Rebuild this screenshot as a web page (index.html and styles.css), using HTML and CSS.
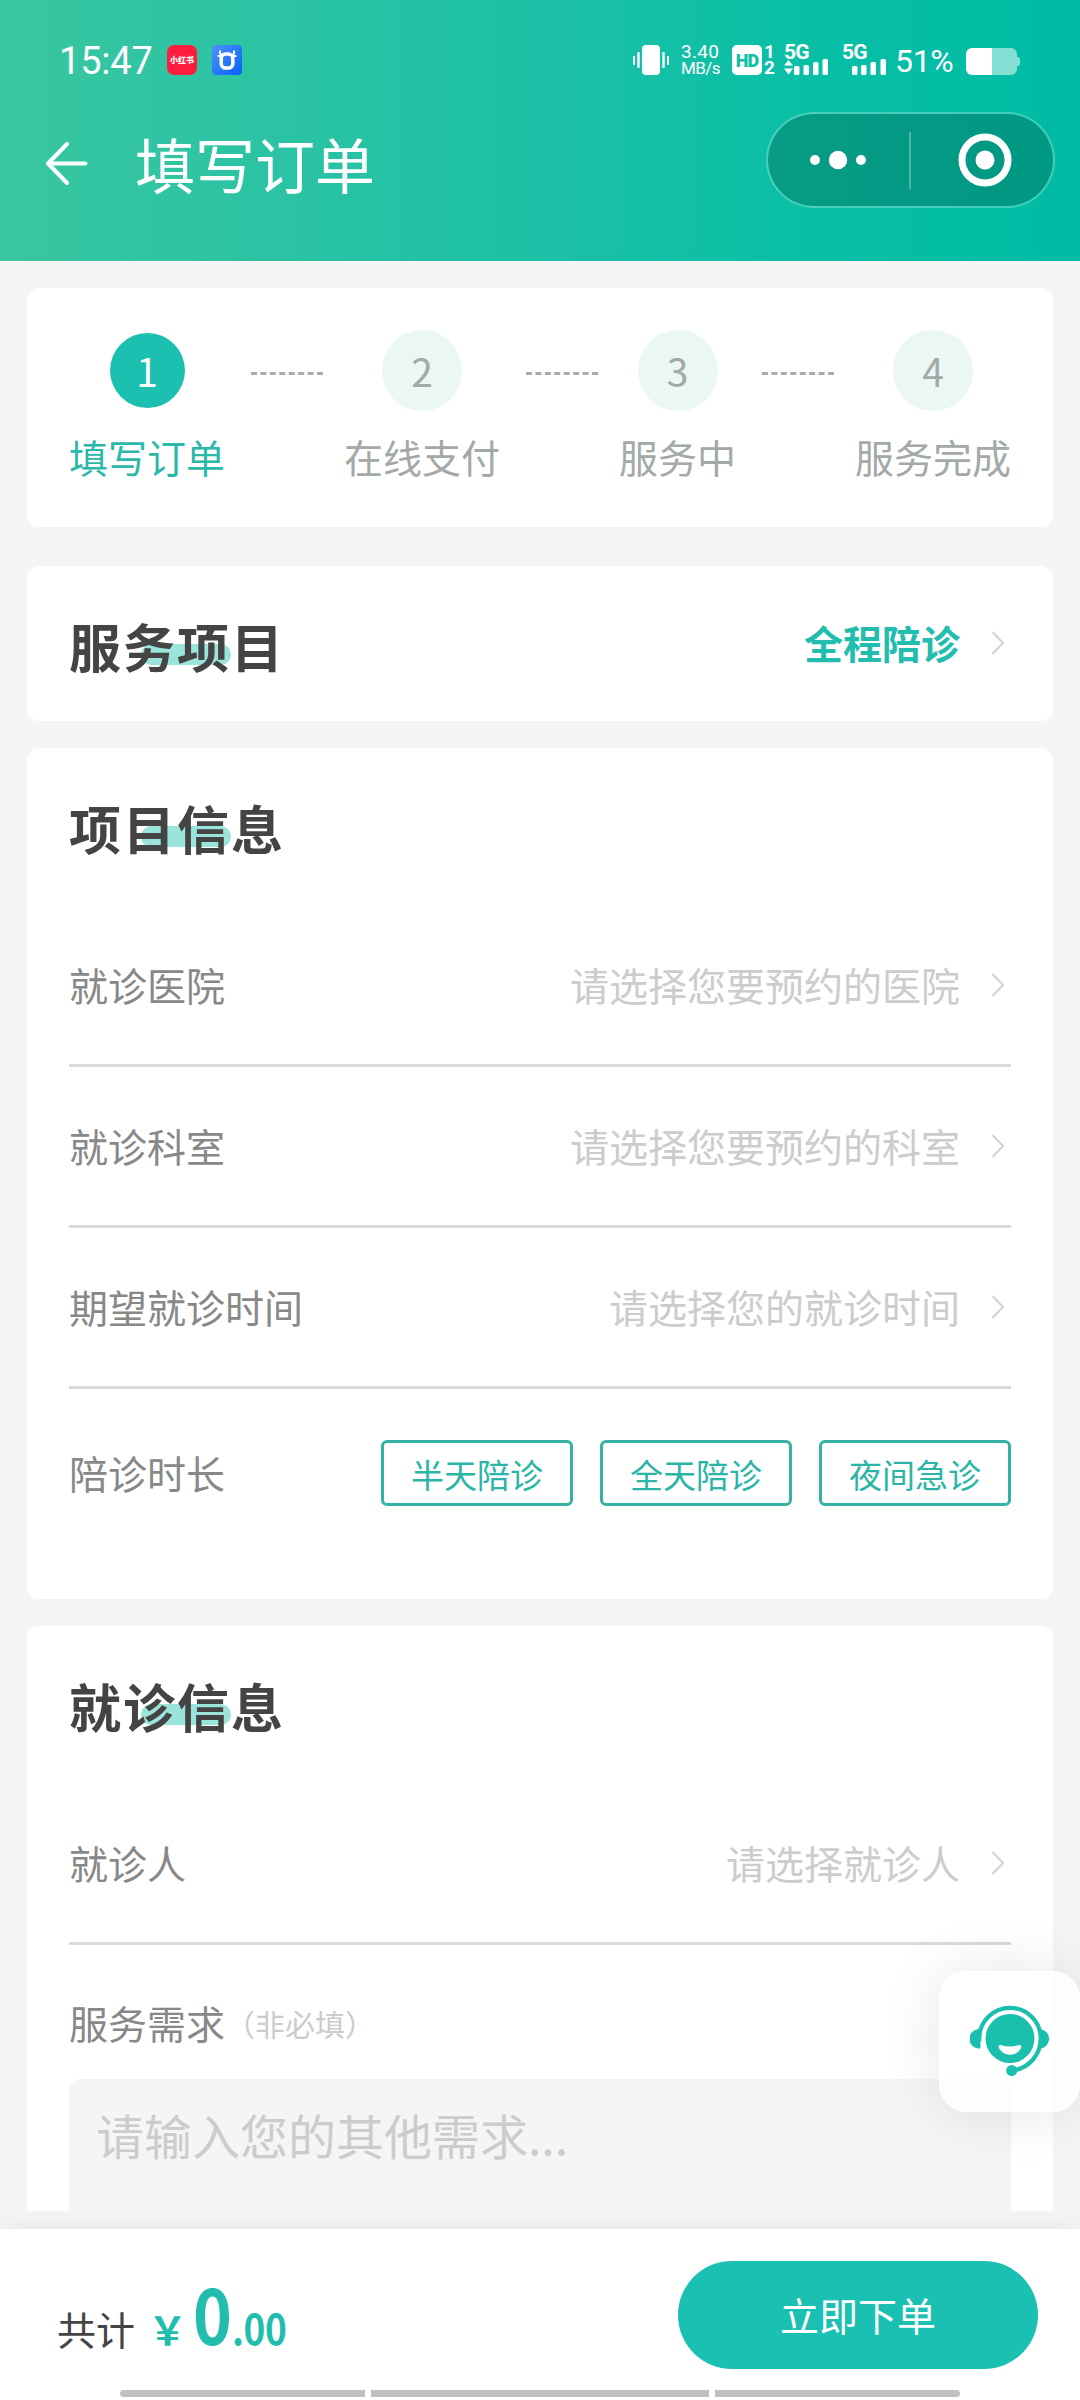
FILE: index.html
```html
<!DOCTYPE html>
<html lang="zh-CN">
<head>
    <meta charset="UTF-8">
    <meta name="viewport" content="width=device-width, initial-scale=1.0">
    <title>填写订单</title>
    <link rel="stylesheet" href="styles.css">
</head>
<body>
    <header class="header">
        <div class="status">
            <span class="clock">15:47</span>
            <span class="app app-red">小红书</span>
            <svg class="app-blue" width="30" height="30" viewBox="0 0 30 30">
                <defs>
                    <linearGradient id="blue" x1="0" y1="0" x2="1" y2="1">
                        <stop offset="0" stop-color="#4d93fb"/>
                        <stop offset="1" stop-color="#0560fb"/>
                    </linearGradient>
                </defs>
                <rect width="30" height="30" rx="4" fill="url(#blue)"/>
                <rect x="9.2" y="9" width="11.6" height="14" rx="4.5" fill="none" stroke="#fff" stroke-width="3.6"/>
                <path d="M8 5.500v3l3 2M22 5.500v3l-3 2M5.500 11h4M24.500 11h-4" fill="none" stroke="#fff" stroke-width="2"/>
            </svg>

            <div class="status-right">
                <svg class="vibrate" width="36" height="30" viewBox="0 0 36 30" fill="#fff">
                    <rect x="9" y="0" width="18" height="30" rx="4"/>
                    <rect x="0" y="11" width="2" height="9" rx="1"/>
                    <rect x="4.300" y="7" width="2.400" height="16" rx="1"/>
                    <rect x="29.300" y="7" width="2.400" height="16" rx="1"/>
                    <rect x="34" y="11" width="2" height="9" rx="1"/>
                </svg>
                <div class="speed">
                    <span>3.40</span>
                    <span>MB/s</span>
                </div>
                <span class="hd">HD</span>
                <div class="sim">
                    <span>1</span>
                    <span>2</span>
                </div>
                <div class="signal">
                    <span>5G</span>
                    <svg width="45" height="16" viewBox="0 0 45 16" fill="#fff">
                        <path d="M0 6.500 4.500 1l4.500 5.500zM0 9.500h9L4.500 15.500z"/>
                        <rect x="10" y="7" width="5.500" height="9" rx="1.500"/>
                        <rect x="19.500" y="6" width="5.500" height="10" rx="1.500"/>
                        <rect x="29" y="3" width="5.500" height="13" rx="1.500"/>
                        <rect x="38.500" y="0" width="5.500" height="16" rx="1.500"/>
                    </svg>
                </div>
                <div class="signal signal-2">
                    <span>5G</span>
                    <svg width="45" height="16" viewBox="0 0 45 16" fill="#fff">
                        <rect x="10" y="7" width="5.500" height="9" rx="1.500"/>
                        <rect x="19" y="6" width="5.500" height="10" rx="1.500"/>
                        <rect x="28.500" y="3" width="5.500" height="13" rx="1.500"/>
                        <rect x="38.500" y="0" width="5.500" height="16" rx="1.500"/>
                    </svg>
                </div>
                <span class="percent">51%</span>
                <svg class="battery" width="54" height="27" viewBox="0 0 54 27">
                    <path d="M6 0h39a6 6 0 0 1 6 6v3q3 0 3 2v5q0 2-3 2v3a6 6 0 0 1-6 6H6z" fill="#fff" opacity="0.52"/>
                    <path d="M6 0h20v27H6a6 6 0 0 1-6-6V6a6 6 0 0 1 6-6z" fill="#fff"/>
                </svg>
            </div>
        </div>

        <div class="nav">
            <svg class="back" width="42" height="43" viewBox="0 0 42 43" fill="none" stroke="#fff" stroke-width="4" stroke-linecap="round" stroke-linejoin="round">
                <path d="M21 2 2 21.500 21 41M3 21.500h36.500"/>
            </svg>
            <h1>填写订单</h1>
            <div class="capsule">
                <svg width="56" height="20" viewBox="0 0 56 20" fill="#fff">
                    <circle cx="5" cy="10" r="5"/>
                    <circle cx="28" cy="10" r="9.200"/>
                    <circle cx="51" cy="10" r="5"/>
                </svg>
                <i class="split"></i>
                <svg width="54" height="54" viewBox="0 0 54 54">
                    <circle cx="27" cy="27" r="23" fill="none" stroke="#fff" stroke-width="7"/>
                    <circle cx="27" cy="27" r="9.500" fill="#fff"/>
                </svg>
            </div>
        </div>
    </header>

    <main class="content">
        <section class="card steps">
            <div class="step active">
                <span class="num">1</span>
                <span class="label">填写订单</span>
            </div>
            <i class="dash"></i>
            <div class="step">
                <span class="num">2</span>
                <span class="label">在线支付</span>
            </div>
            <i class="dash"></i>
            <div class="step">
                <span class="num">3</span>
                <span class="label">服务中</span>
            </div>
            <i class="dash"></i>
            <div class="step">
                <span class="num">4</span>
                <span class="label">服务完成</span>
            </div>
        </section>

        <section class="card service">
            <h2>服务项目</h2>
            <span class="value chosen">全程陪诊</span>
            <svg class="chevron" width="12" height="24" viewBox="0 0 12 24"><path d="M0.500 1 11 12 0.500 23"/></svg>
        </section>

        <section class="card project">
            <h2>项目信息</h2>
            <div class="row">
                <span class="name">就诊医院</span>
                <span class="value">请选择您要预约的医院</span>
                <svg class="chevron" width="12" height="24" viewBox="0 0 12 24"><path d="M0.500 1 11 12 0.500 23"/></svg>
            </div>
            <div class="row">
                <span class="name">就诊科室</span>
                <span class="value">请选择您要预约的科室</span>
                <svg class="chevron" width="12" height="24" viewBox="0 0 12 24"><path d="M0.500 1 11 12 0.500 23"/></svg>
            </div>
            <div class="row">
                <span class="name">期望就诊时间</span>
                <span class="value">请选择您的就诊时间</span>
                <svg class="chevron" width="12" height="24" viewBox="0 0 12 24"><path d="M0.500 1 11 12 0.500 23"/></svg>
            </div>
            <div class="row duration">
                <span class="name">陪诊时长</span>
                <div class="options">
                    <button>半天陪诊</button>
                    <button>全天陪诊</button>
                    <button>夜间急诊</button>
                </div>
            </div>
        </section>

        <section class="card patient">
            <h2>就诊信息</h2>
            <div class="row">
                <span class="name">就诊人</span>
                <span class="value">请选择就诊人</span>
                <svg class="chevron" width="12" height="24" viewBox="0 0 12 24"><path d="M0.500 1 11 12 0.500 23"/></svg>
            </div>
            <div class="demand">
                <span class="name">服务需求</span><span class="optional">（非必填）</span>
            </div>
            <div class="textarea">请输入您的其他需求...</div>
        </section>
    </main>

    <!-- customer service -->
    <div class="kefu">
        <svg width="80" height="72" viewBox="0 0 80 72">
            <circle cx="40" cy="33.500" r="24.500" fill="#1bbfae"/>
            <path d="M9.300 36V33.500a30.700 30.700 0 0 1 61.400 0C70.700 50 59 63 43 65.500" fill="none" stroke="#1bbfae" stroke-width="4.200"/>
            <path d="M10.300 43.500A9.800 9.800 0 0 1 8 24h3z" fill="#1bbfae"/>
            <path d="M70 24a9.800 9.800 0 0 1 .5 19.500L68.700 45z" fill="#1bbfae"/>
            <circle cx="41.700" cy="65.500" r="5.500" fill="#1bbfae"/>
            <path d="M31 40q9 3 18 0c2.500-.5 3 2 1.500 4-4.500 7.500-16.500 7.500-21 0-1.500-2-1-4.500 1.500-4z" fill="#fff"/>
        </svg>
    </div>

    <footer class="bar">
        <div class="pay">
            <div class="total">
                <span class="text">共计</span>
                <span class="yen">￥</span>
                <span class="int">0</span>
                <span class="dec">.00</span>
            </div>
            <button class="submit">立即下单</button>
        </div>
        <div class="home">
            <i></i>
            <i></i>
            <i></i>
        </div>
    </footer>
</body>
</html>
```
FILE: styles.css
```css
* {
    box-sizing: border-box;
    margin: 0;
    padding: 0;
}
body {
    width: 1080px;
    height: 2400px;
    display: flex;
    flex-direction: column;
    position: relative;
    overflow: hidden;
    background: #f5f5f5;
    font-family: "Noto Sans CJK SC", sans-serif;
    font-size: 39px;
    color: #444;
}
svg {
    display: block;
    flex-shrink: 0;
}
button {
    font-family: inherit;
}

/* header */
.header {
    height: 261px;
    flex-shrink: 0;
    background: linear-gradient(90deg, #39c6a1, #1dc0a6 50%, #08bfa6 75%, #00bba4);
    color: #fff;
}
.status {
    height: 112px;
    padding: 8px 60px 0 59px;
    display: flex;
    align-items: center;
    font-family: Roboto, sans-serif;
}
.clock {
    width: 108px;
    font-size: 38px;
    line-height: 40px;
    letter-spacing: -0.2px;
    padding-top: 1px;
}
.app-red {
    width: 30px;
    height: 30px;
    border-radius: 7px;
    background: #fe1d3f;
    font: 900 8px/30px "Noto Sans CJK SC", sans-serif;
    text-align: center;
    white-space: nowrap;
}
.app-blue {
    margin-left: 15px;
}
.status-right {
    margin-left: auto;
    display: flex;
    align-items: center;
    height: 30px;
}
.speed {
    width: 51px;
    margin-left: 12px;
    display: flex;
    flex-direction: column;
    font-size: 17px;
    line-height: 16px;
    letter-spacing: -0.6px;
}
.speed span:first-child {
    font-size: 19px;
    letter-spacing: 0.3px;
}
.hd {
    width: 30px;
    height: 30px;
    border-radius: 5px;
    background: #fff;
    color: #0dbfa6;
    font-size: 18px;
    font-weight: 900;
    line-height: 31px;
    text-align: center;
    letter-spacing: -1px;
}
.sim {
    width: 21px;
    padding-left: 2px;
    display: flex;
    flex-direction: column;
    font-size: 19px;
    font-weight: 700;
    line-height: 16px;
}
.signal {
    width: 58px;
    height: 30px;
    margin-left: 1px;
    font-size: 21px;
    font-weight: 700;
    line-height: 15px;
    letter-spacing: -0.8px;
}
.signal span {
    display: block;
    height: 14px;
}
.signal-2 {
    width: 53px;
    margin-left: 0;
}
.percent {
    width: 71px;
    font-size: 32px;
    line-height: 34px;
    padding-top: 2px;
    letter-spacing: -0.3px;
}
.battery {
    margin-top: 2px;
}
.nav {
    height: 96px;
    padding: 0 25px 0 46px;
    display: flex;
    align-items: center;
}
.back {
    margin-top: 7px;
}
.nav h1 {
    margin-left: 47px;
    padding-top: 5px;
    font-size: 60px;
    font-weight: 400;
    line-height: 80px;
}
.capsule {
    width: 289px;
    height: 96px;
    margin-left: auto;
    padding: 0 41px 0 42px;
    display: flex;
    align-items: center;
    justify-content: space-between;
    border: 2px solid rgba(255, 255, 255, 0.25);
    border-radius: 48px;
    background: rgba(0, 40, 30, 0.24);
    background-clip: padding-box;
}
.split {
    width: 2px;
    height: 57px;
    margin-left: -4px;
    background: rgba(255, 255, 255, 0.3);
}

/* cards */
.content {
    height: 1950px;
    padding: 27px 27px 0;
    overflow: hidden;
}
.card {
    padding: 40px 42px 0;
    border-radius: 12px;
    background: #fff;
}
.card h2 {
    position: relative;
    z-index: 0;
    width: fit-content;
    height: 76px;
    font-size: 52px;
    font-weight: 700;
    line-height: 79px;
    letter-spacing: 2px;
}
/* green marker under the heading */
.card h2::after {
    content: "";
    position: absolute;
    z-index: -1;
    left: 72px;
    top: 38px;
    width: 90px;
    height: 21px;
    border-radius: 11px;
    background: #9be4dc;
}
.steps {
    height: 239px;
    padding-top: 42px;
    display: flex;
}
.step {
    display: flex;
    flex-direction: column;
    align-items: center;
    color: #a3a9a7;
}
.num {
    width: 80px;
    height: 81px;
    border-radius: 50%;
    background: #ebf7f4;
    line-height: 81px;
    text-align: center;
}
.label {
    margin-top: 17px;
    line-height: 56px;
}
.step.active {
    color: #2bb8a9;
}
.active .num {
    width: 75px;
    height: 75px;
    margin: 3px 0;
    line-height: 75px;
    background: #1bc0b0;
    color: #fff;
}
.dash {
    width: 72px;
    margin: 42px 21px 0 26px;
    border-top: 3px dashed #aaa;
}
.service {
    height: 155px;
    margin-top: 39px;
    display: flex;
}
.value {
    margin-left: auto;
    color: #ccc;
}
.chosen {
    line-height: 72px;
    font-weight: 700;
    color: #22bdae;
}
.chevron {
    margin: 0 7px 0 32px;
    fill: none;
    stroke: #d3d3d3;
    stroke-width: 2;
}
.service .chevron {
    margin-top: 25px;
}
.project {
    height: 851px;
    margin-top: 27px;
}
.project h2,
.patient h2 {
    margin-bottom: 42px;
}
.row {
    height: 161px;
    display: flex;
    align-items: center;
    line-height: 56px;
    border-bottom: 3px solid #dadada;
}
.row .name,
.row > .value {
    padding-bottom: 3px;
}
.name {
    color: #888;
}
.duration {
    height: 168px;
    border-bottom: none;
}
.options {
    margin-left: auto;
    display: flex;
    gap: 27px;
}
.options button {
    width: 192px;
    height: 66px;
    padding-top: 1px;
    border: 3px solid #34b3a5;
    border-radius: 6px;
    background: #fff;
    color: #2bb5a7;
    font-size: 33px;
    line-height: 56px;
}
.patient {
    height: 585px;
    margin-top: 27px;
    border-radius: 12px 12px 0 0;
}
.demand {
    height: 134px;
    padding-top: 49px;
    display: flex;
    line-height: 56px;
}
.optional {
    padding-top: 1px;
    font-size: 30px;
    color: #ccc;
}
.textarea {
    height: 132px;
    padding: 19px 27px;
    border-radius: 12px 12px 0 0;
    background: #f5f5f5;
    font-size: 48px;
    line-height: 72px;
    color: #ccc;
}

.kefu {
    position: absolute;
    left: 939px;
    top: 1971px;
    width: 141px;
    height: 141px;
    padding: 34px 0 0 31px;
    border-radius: 27px;
    background: rgba(255, 255, 255, 0.8);
    box-shadow: 0 0 60px rgba(0, 0, 0, 0.1);
}

/* bottom bar */
.bar {
    position: relative;
    height: 171px;
    margin-top: 18px;
    flex-shrink: 0;
    background: #fff;
    box-shadow: 0 0 24px rgba(0, 0, 0, 0.07);
}
.pay {
    height: 161px;
    padding: 32px 42px 0 57px;
    display: flex;
    justify-content: space-between;
    align-items: flex-start;
}
.total {
    margin-top: -3px;
    display: flex;
    align-items: baseline;
    line-height: 110px;
}
.yen,
.int,
.dec {
    font-weight: 700;
    color: #22bdae;
}
.yen {
    margin-left: 13px;
}
/* price digits are slightly condensed */
.int,
.dec {
    transform: scaleX(0.88);
    transform-origin: left;
}
.int {
    width: 39px;
    margin-left: 6px;
    font-size: 75px;
}
.dec {
    font-size: 42px;
    letter-spacing: -0.5px;
}
.submit {
    width: 360px;
    height: 108px;
    padding-bottom: 3px;
    border: none;
    border-radius: 54px;
    background: #1ac0b2;
    color: #fff;
    font-size: 39px;
}
.home {
    padding: 0 120px;
    display: grid;
    grid-template-columns: 245px 338px 245px;
    gap: 6px;
}
.home i {
    height: 7px;
    background: #c1c1c1;
}
.home i:first-child {
    border-radius: 4px 0 0 4px;
}
.home i:last-child {
    border-radius: 0 4px 4px 0;
}
```
